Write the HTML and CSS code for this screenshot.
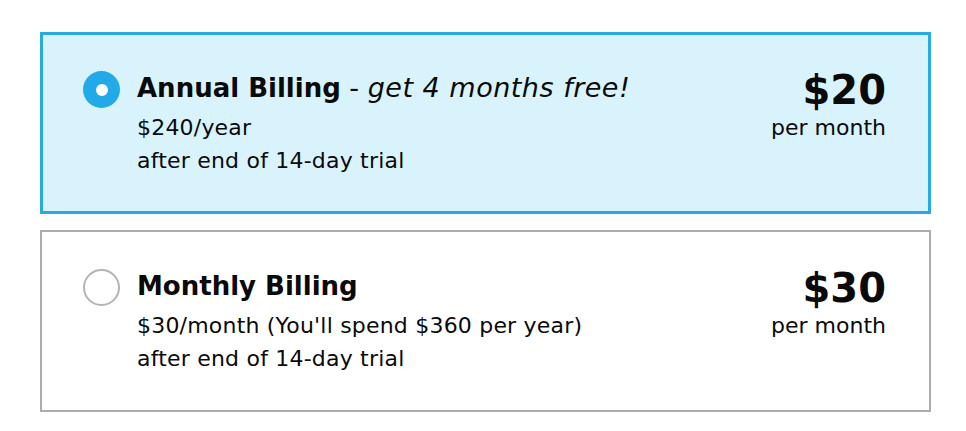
FILE: index.html
```html
<!DOCTYPE html>
<html lang="en">
<head>
  <meta charset="UTF-8">
  <meta name="viewport" content="width=device-width, initial-scale=1.0">
  <title>Billing</title>
  <link rel="stylesheet" href="styles.css">
</head>
<body>
  <div class="plans">
    <label class="plan selected">
      <span class="radio"><span class="dot"></span></span>
      <div class="plan-info">
        <div class="plan-title"><strong>Annual Billing</strong> - <em>get 4 months free!</em></div>
        <div class="plan-line first">$240/year</div>
        <div class="plan-line">after end of 14-day trial</div>
      </div>
      <div class="plan-price">
        <div class="amount">$20</div>
        <div class="period">per month</div>
      </div>
    </label>

    <label class="plan">
      <span class="radio"></span>
      <div class="plan-info">
        <div class="plan-title"><strong>Monthly Billing</strong></div>
        <div class="plan-line first">$30/month (You'll spend $360 per year)</div>
        <div class="plan-line">after end of 14-day trial</div>
      </div>
      <div class="plan-price">
        <div class="amount">$30</div>
        <div class="period">per month</div>
      </div>
    </label>
  </div>
</body>
</html>
```

FILE: styles.css
```css
body {
  margin: 0;
  font-family: "DejaVu Sans", "Open Sans", sans-serif;
  color: #0a0a0a;
  background: #fff;
}

.plans {
  display: flex;
  flex-direction: column;
  gap: 16px;
  width: 891px;
  padding: 32px 0 0 40px;
}

.plan {
  display: flex;
  align-items: flex-start;
  box-sizing: border-box;
  height: 182px;
  padding: 37px 43px 0 41px;
  border: 2px solid #acacac;
  background: #fff;
  cursor: pointer;
}

.plan.selected {
  border: 3px solid #29abe2;
  background: #d9f3fd;
  padding: 36px 42px 0 40px;
}

.radio {
  flex: none;
  display: flex;
  align-items: center;
  justify-content: center;
  box-sizing: border-box;
  width: 37px;
  height: 37px;
  border: 2px solid #b4b4b4;
  border-radius: 50%;
  background: #fff;
}

.selected .radio {
  border: none;
  background: #22aae8;
}

.dot {
  width: 12px;
  height: 12px;
  border-radius: 50%;
  background: #fff;
}

.plan-info {
  flex: 1;
  margin-left: 17px;
}

.plan-title {
  font-size: 27px;
  line-height: 34px;
}

.plan-title strong {
  font-size: 26px;
  font-weight: 700;
}

.plan-title em {
  font-style: italic;
  letter-spacing: 0.5px;
}

.plan-line {
  font-size: 22px;
  line-height: 33px;
  letter-spacing: 0.2px;
}

.plan-line.first {
  margin-top: 6px;
}

.plan-price {
  margin-top: 1px;
  text-align: right;
}

.amount {
  font-size: 40px;
  font-weight: 700;
  line-height: 36px;
}

.period {
  font-size: 22px;
  line-height: 39px;
}
```
